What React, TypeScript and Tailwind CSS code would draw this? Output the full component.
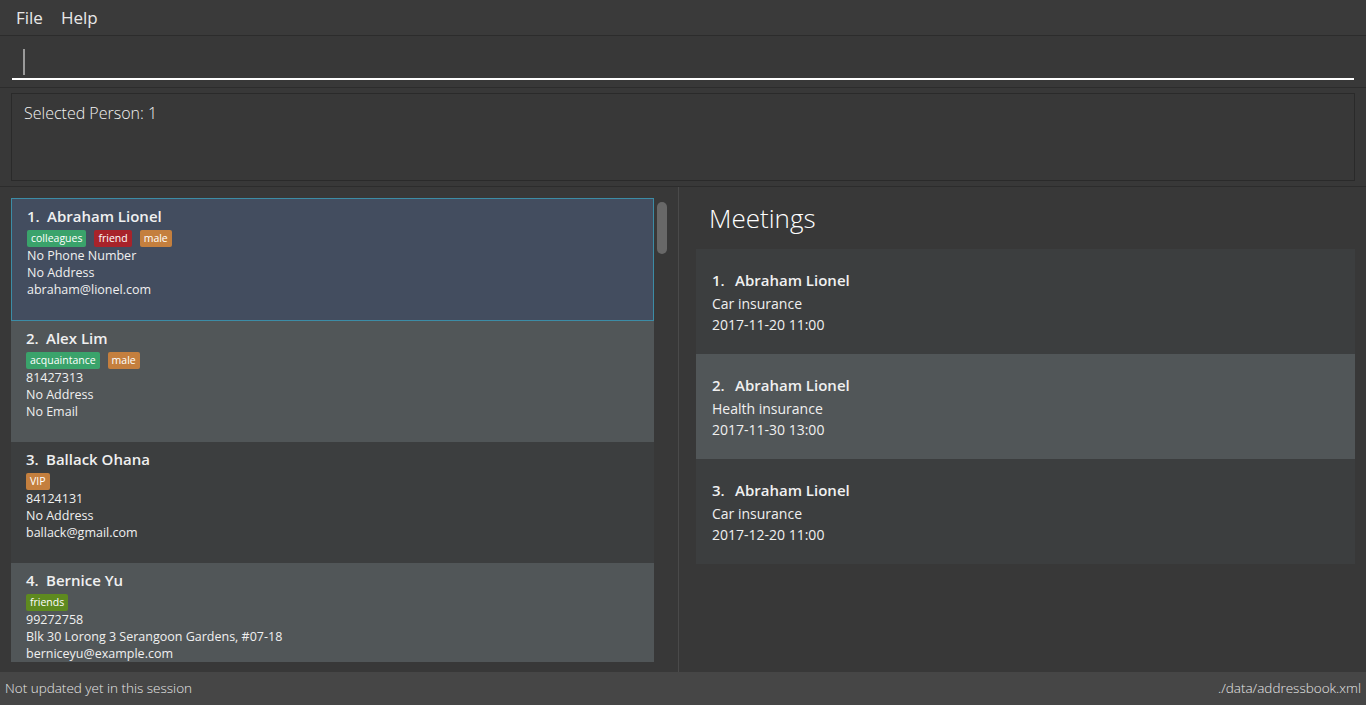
import type { ReactNode } from 'react'

type Tag = { label: string; color: string }

type Person = {
  name: string
  tags: Tag[]
  phone: string
  address: string
  email: string
}

const people: Person[] = [
  {
    name: 'Abraham Lionel',
    tags: [
      { label: 'colleagues', color: 'bg-[#3aa36b]' },
      { label: 'friend', color: 'bg-[#a8232a]' },
      { label: 'male', color: 'bg-[#c47f3e]' },
    ],
    phone: 'No Phone Number',
    address: 'No Address',
    email: 'abraham@lionel.com',
  },
  {
    name: 'Alex Lim',
    tags: [
      { label: 'acquaintance', color: 'bg-[#3aa36b]' },
      { label: 'male', color: 'bg-[#c47f3e]' },
    ],
    phone: '81427313',
    address: 'No Address',
    email: 'No Email',
  },
  {
    name: 'Ballack Ohana',
    tags: [{ label: 'VIP', color: 'bg-[#c47f3e]' }],
    phone: '84124131',
    address: 'No Address',
    email: 'ballack@gmail.com',
  },
  {
    name: 'Bernice Yu',
    tags: [{ label: 'friends', color: 'bg-[#5e8a1f]' }],
    phone: '99272758',
    address: 'Blk 30 Lorong 3 Serangoon Gardens, #07-18',
    email: 'berniceyu@example.com',
  },
]

const meetings = [
  { name: 'Abraham Lionel', title: 'Car insurance', date: '2017-11-20 11:00' },
  { name: 'Abraham Lionel', title: 'Health insurance', date: '2017-11-30 13:00' },
  { name: 'Abraham Lionel', title: 'Car insurance', date: '2017-12-20 11:00' },
]

function cardBg(index: number, selected: boolean) {
  if (selected) return 'h-[123px] bg-[#434d5f] border border-[#3c8ca6] pl-[15px]'
  return index % 2 === 0 ? 'h-[121px] bg-[#3c3e3f] pl-[15px]' : 'h-[121px] bg-[#515658] pl-[15px]'
}

function PersonCard({ person, index, selected }: { person: Person; index: number; selected: boolean }) {
  return (
    <div className={`shrink-0 pt-[7px] ${cardBg(index, selected)}`}>
      <div className="flex h-[20px] items-center text-[15px] font-semibold text-[#f0f0f0]">
        <span className="w-[20px]">{index + 1}.</span>
        <span>{person.name}</span>
      </div>
      <div className="mt-[4px] flex h-[17px] gap-[8px]">
        {person.tags.map((tag) => (
          <span
            key={tag.label}
            className={`flex items-center rounded-[2px] px-[4px] text-[10.5px] leading-none text-white ${tag.color}`}
          >
            {tag.label}
          </span>
        ))}
      </div>
      <div className="text-[12.5px] leading-[17px] text-[#f0f0f0]">
        <div>{person.phone}</div>
        <div>{person.address}</div>
        <div>{person.email}</div>
      </div>
    </div>
  )
}

function Pane({ children, className = '' }: { children: ReactNode; className?: string }) {
  return <div className={`border-b border-[#2c2c2c] ${className}`}>{children}</div>
}

export default function App() {
  return (
    <div
      className="flex h-[705px] w-[1366px] flex-col overflow-hidden bg-[#383838] text-white"
      style={{ fontFamily: '"Open Sans", "Noto Sans", sans-serif' }}
    >
      <Pane className="flex h-[36px] shrink-0 items-center gap-[18px] bg-[#3a3a3a] pl-[16px] text-[17px] text-[#e8e8e8]">
        <span>File</span>
        <span>Help</span>
      </Pane>

      <Pane className="h-[52px] shrink-0 px-[12px] pt-[10px]">
        <div className="flex h-[34px] items-center border-b-2 border-white pl-[11px]">
          <div className="h-[26px] w-[2px] bg-[#9a9a9a]" />
        </div>
      </Pane>

      <Pane className="h-[99px] shrink-0 px-[11px] pt-[5px]">
        <div className="h-[88px] border border-[#2a2a2a] px-[12px] pt-[7px] text-[16px] font-light text-[#f2f2f2]">
          Selected Person: 1
        </div>
      </Pane>

      <div className="flex min-h-0 flex-1">
        <div className="flex w-[679px] shrink-0 border-r border-[#4a4a4a] pt-[11px] pl-[11px]">
          <div className="flex h-[464px] w-[643px] flex-col overflow-hidden">
            {people.map((person, index) => (
              <PersonCard key={person.name} person={person} index={index} selected={index === 0} />
            ))}
          </div>
          <div className="ml-[3px] mt-[4px] h-[52px] w-[10px] rounded-[5px] bg-[#686868]" />
        </div>

        <div className="flex flex-1 flex-col pl-[17px] pr-[11px]">
          <h2 className="mt-[14px] ml-[13px] text-[26px] font-light leading-[34px] text-white">Meetings</h2>
          <div className="mt-[14px] flex flex-col">
            {meetings.map((meeting, index) => (
              <div
                key={index}
                className={`h-[105px] pl-[16px] pt-[20px] ${index % 2 === 0 ? 'bg-[#3c3e3f]' : 'bg-[#515658]'}`}
              >
                <div className="flex h-[22px] items-center text-[15px] font-semibold text-[#f0f0f0]">
                  <span className="w-[23px]">{index + 1}.</span>
                  <span>{meeting.name}</span>
                </div>
                <div className="mt-[2px] text-[14px] leading-[21px] text-[#f0f0f0]">
                  <div>{meeting.title}</div>
                  <div>{meeting.date}</div>
                </div>
              </div>
            ))}
          </div>
        </div>
      </div>

      <div className="flex h-[33px] shrink-0 items-center justify-between bg-[#464646] px-[5px] text-[13.5px] font-light text-[#e6e6e6]">
        <span>Not updated yet in this session</span>
        <span>./data/addressbook.xml</span>
      </div>
    </div>
  )
}
